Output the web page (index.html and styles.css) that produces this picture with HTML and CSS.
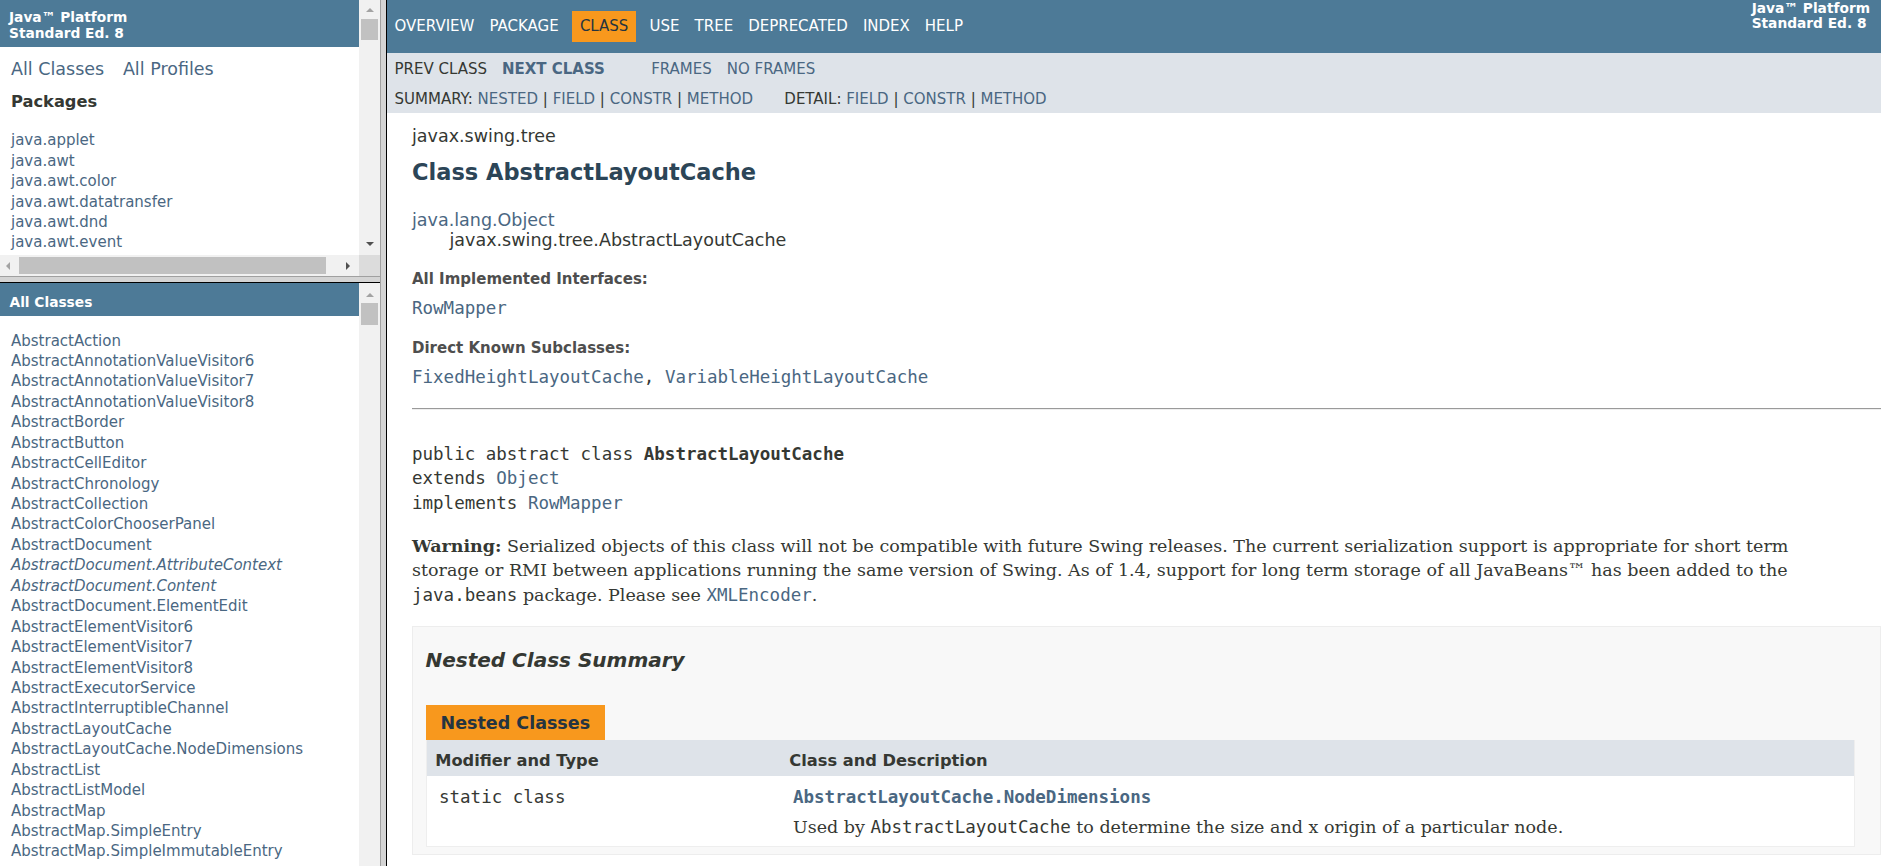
FILE: index.html
```html
<!DOCTYPE html>
<html lang="en">
<head>
<meta charset="utf-8">
<title>AbstractLayoutCache (Java Platform SE 8 )</title>
<link rel="stylesheet" href="styles.css">
</head>
<body>
<div class="frameset">
  <div class="leftcol">
    <div class="pkgframe">
      <div class="pkgframe-main">
        <div class="frame-view">
          <h1 class="bar bar-top">Java™ Platform<br>Standard Ed. 8</h1>
          <div class="indexHeader"><span><a href="#">All Classes</a></span><span><a href="#">All Profiles</a></span></div>
          <div class="indexContainer pkgContainer">
            <h2 class="pkgTitle">Packages</h2>
            <ul class="pkgList">
              <li><a href="#">java.applet</a></li>
              <li><a href="#">java.awt</a></li>
              <li><a href="#">java.awt.color</a></li>
              <li><a href="#">java.awt.datatransfer</a></li>
              <li><a href="#">java.awt.dnd</a></li>
              <li><a href="#">java.awt.event</a></li>
            </ul>
          </div>
        </div>
        <div class="vscroll">
          <div class="sb-btn sb-up"><span class="tri-up"></span></div>
          <div class="vthumb"></div>
          <div class="sb-btn sb-down"><span class="tri-down"></span></div>
        </div>
      </div>
      <div class="hscroll-row">
        <div class="hscroll">
          <div class="sb-left"><span class="tri-left"></span></div>
          <div class="hthumb"></div>
          <div class="sb-right"><span class="tri-right"></span></div>
        </div>
        <div class="sb-corner"></div>
      </div>
    </div>
    <div class="hborder"></div>
    <div class="classframe">
      <div class="frame-view">
        <h1 class="bar bar-low">All Classes</h1>
        <div class="indexContainer classContainer">
          <ul class="classList">
            <li><a href="#">AbstractAction</a></li>
            <li><a href="#">AbstractAnnotationValueVisitor6</a></li>
            <li><a href="#">AbstractAnnotationValueVisitor7</a></li>
            <li><a href="#">AbstractAnnotationValueVisitor8</a></li>
            <li><a href="#">AbstractBorder</a></li>
            <li><a href="#">AbstractButton</a></li>
            <li><a href="#">AbstractCellEditor</a></li>
            <li><a href="#">AbstractChronology</a></li>
            <li><a href="#">AbstractCollection</a></li>
            <li><a href="#">AbstractColorChooserPanel</a></li>
            <li><a href="#">AbstractDocument</a></li>
            <li><a href="#" class="iface">AbstractDocument.AttributeContext</a></li>
            <li><a href="#" class="iface">AbstractDocument.Content</a></li>
            <li><a href="#">AbstractDocument.ElementEdit</a></li>
            <li><a href="#">AbstractElementVisitor6</a></li>
            <li><a href="#">AbstractElementVisitor7</a></li>
            <li><a href="#">AbstractElementVisitor8</a></li>
            <li><a href="#">AbstractExecutorService</a></li>
            <li><a href="#">AbstractInterruptibleChannel</a></li>
            <li><a href="#">AbstractLayoutCache</a></li>
            <li><a href="#">AbstractLayoutCache.NodeDimensions</a></li>
            <li><a href="#">AbstractList</a></li>
            <li><a href="#">AbstractListModel</a></li>
            <li><a href="#">AbstractMap</a></li>
            <li><a href="#">AbstractMap.SimpleEntry</a></li>
            <li><a href="#">AbstractMap.SimpleImmutableEntry</a></li>
          </ul>
        </div>
      </div>
      <div class="vscroll">
        <div class="sb-btn sb-up sb-up-low"><span class="tri-up"></span></div>
        <div class="vthumb vthumb-low"></div>
      </div>
    </div>
  </div>
  <div class="vborder"></div>
  <div class="mainframe">
    <div class="topNav">
      <ul class="navList">
        <li><a href="#">Overview</a></li>
        <li><a href="#">Package</a></li>
        <li class="navBarCell1Rev">Class</li>
        <li><a href="#">Use</a></li>
        <li><a href="#">Tree</a></li>
        <li><a href="#">Deprecated</a></li>
        <li><a href="#">Index</a></li>
        <li><a href="#">Help</a></li>
      </ul>
      <div class="aboutLanguage">Java™ Platform<br>Standard Ed. 8</div>
    </div>
    <div class="subNav">
      <div class="subNavRow">
        <ul class="navList">
          <li>Prev&nbsp;Class</li>
          <li><a href="#"><span class="typeNameLink">Next&nbsp;Class</span></a></li>
        </ul>
        <ul class="navList">
          <li><a href="#">Frames</a></li>
          <li><a href="#">No&nbsp;Frames</a></li>
        </ul>
      </div>
      <div class="subNavRow2">
        <ul class="subNavList">
          <li>Summary:&nbsp;</li>
          <li><a href="#">Nested</a>&nbsp;|&nbsp;</li>
          <li><a href="#">Field</a>&nbsp;|&nbsp;</li>
          <li><a href="#">Constr</a>&nbsp;|&nbsp;</li>
          <li><a href="#">Method</a></li>
        </ul>
        <ul class="subNavList">
          <li>Detail:&nbsp;</li>
          <li><a href="#">Field</a>&nbsp;|&nbsp;</li>
          <li><a href="#">Constr</a>&nbsp;|&nbsp;</li>
          <li><a href="#">Method</a></li>
        </ul>
      </div>
    </div>
    <div class="header">
      <div class="subTitle">javax.swing.tree</div>
      <h2 class="title">Class AbstractLayoutCache</h2>
    </div>
    <div class="contentContainer">
      <ul class="inheritance">
        <li><a href="#">java.lang.Object</a></li>
        <li>
          <ul class="inheritance inner">
            <li>javax.swing.tree.AbstractLayoutCache</li>
          </ul>
        </li>
      </ul>
      <div class="description">
        <dl class="infoList">
          <dt>All Implemented Interfaces:</dt>
          <dd><a href="#">RowMapper</a></dd>
        </dl>
        <dl class="infoList">
          <dt>Direct Known Subclasses:</dt>
          <dd><a href="#">FixedHeightLayoutCache</a>, <a href="#">VariableHeightLayoutCache</a></dd>
        </dl>
        <hr class="rule">
        <pre class="signature">public abstract class <span class="typeNameLabel">AbstractLayoutCache</span>
extends <a href="#">Object</a>
implements <a href="#">RowMapper</a></pre>
        <div class="docBlock"><strong>Warning:</strong> Serialized objects of this class will not be compatible with future Swing releases. The current serialization support is appropriate for short term storage or RMI between applications running the same version of Swing. As of 1.4, support for long term storage of all JavaBeans™ has been added to the <code class="inlineCode">java.beans</code> package. Please see <a href="#"><code class="inlineCode">XMLEncoder</code></a>.</div>
      </div>
      <div class="summaryBox">
        <h3 class="summaryTitle">Nested Class Summary</h3>
        <table class="memberSummary">
          <caption><span class="tabLabel">Nested Classes</span></caption>
          <tr>
            <th class="colFirst">Modifier and Type</th>
            <th class="colLast">Class and Description</th>
          </tr>
          <tr>
            <td class="colFirst"><code class="cellCode">static class</code></td>
            <td class="colLast"><code class="cellCode"><a href="#" class="memberNameLink">AbstractLayoutCache.NodeDimensions</a></code>
              <div class="cellBlock">Used by <code class="inlineCode">AbstractLayoutCache</code> to determine the size and x origin of a particular node.</div>
            </td>
          </tr>
        </table>
      </div>
    </div>
  </div>
</div>
</body>
</html>
```

FILE: styles.css
```css
* { box-sizing: border-box; }
html, body { margin: 0; padding: 0; }
body {
  width: 1881px;
  height: 866px;
  overflow: hidden;
  background: #ffffff;
  color: #353833;
  font-family: "DejaVu Sans", "Liberation Sans", Arial, sans-serif;
}
a { color: #4A6782; text-decoration: none; }
ul { margin: 0; padding: 0; list-style: none; }
h1, h2, h3 { margin: 0; }

/* ---------- frameset ---------- */
.frameset { display: flex; height: 866px; }
.leftcol { flex: none; width: 380px; display: flex; flex-direction: column; }
.pkgframe { flex: none; height: 276px; display: flex; flex-direction: column; }
.pkgframe-main { flex: none; height: 255px; display: flex; }
.frame-view { flex: none; width: 359px; overflow: hidden; background: #fff; }
.hborder {
  flex: none; height: 7px;
  border-top: 1px solid #a0a0a0;
  border-bottom: 1px solid #000;
  background: #d4d4d4;
}
.classframe { flex: 1; min-height: 0; display: flex; }
.vborder {
  flex: none; width: 7px;
  border-left: 1px solid #a0a0a0;
  border-right: 1px solid #000;
  background: #d4d4d4;
}
.mainframe { flex: none; width: 1494px; overflow: hidden; }

/* ---------- fake scrollbars ---------- */
.vscroll {
  flex: none; width: 21px; background: #f1f1f1;
  display: flex; flex-direction: column; align-items: center;
}
.sb-btn { flex: none; width: 21px; height: 17px; display: flex; justify-content: center; }
.sb-up { padding-top: 7.5px; }
.sb-up-low { padding-top: 9.5px; }
.sb-down { margin-top: auto; padding-top: 4px; }
.tri-up {
  width: 0; height: 0;
  border-left: 4px solid transparent; border-right: 4px solid transparent;
  border-bottom: 4px solid #a3a3a3;
}
.tri-down {
  width: 0; height: 0;
  border-left: 4px solid transparent; border-right: 4px solid transparent;
  border-top: 4px solid #505050;
}
.vthumb { flex: none; width: 17px; height: 21px; margin-top: 2px; background: #c1c1c1; }
.vthumb-low { margin-top: 3px; height: 22px; }
.hscroll-row { flex: none; height: 21px; display: flex; }
.hscroll { flex: none; width: 359px; background: #f1f1f1; display: flex; align-items: center; }
.sb-left { flex: none; width: 19px; padding-left: 6px; display: flex; }
.sb-right { flex: none; margin-left: auto; width: 17px; padding-left: 4px; display: flex; }
.tri-left {
  width: 0; height: 0;
  border-top: 4px solid transparent; border-bottom: 4px solid transparent;
  border-right: 4px solid #a3a3a3;
}
.tri-right {
  width: 0; height: 0;
  border-top: 4px solid transparent; border-bottom: 4px solid transparent;
  border-left: 4px solid #505050;
}
.hthumb { flex: none; width: 307px; height: 17px; background: #c1c1c1; }
.sb-corner { flex: none; width: 21px; background: #dcdcdc; }

/* ---------- left frames ---------- */
.bar {
  background: #4D7A97;
  color: #ffffff;
  font-size: 13.75px;
  font-weight: bold;
  line-height: 16px;
  white-space: nowrap;
}
.bar-top { padding: 9px 7px 5.7px 9px; }
.bar-low { padding: 11px 7px 5.7px 9.5px; }
.indexHeader {
  margin: 12.1px 0 0 11px;
  display: flex;
  gap: 18.7px;
  font-size: 17.5px;
  line-height: 20.4px;
  white-space: nowrap;
}
.indexContainer { margin-left: 11px; font-size: 15px; white-space: nowrap; }
.pkgTitle {
  margin-top: 13px;
  font-size: 16.25px;
  line-height: 19px;
  padding-bottom: 3.75px;
  color: #353833;
}
.pkgList { margin-top: 13.9px; }
.pkgList li, .classList li { padding-top: 2.45px; line-height: 18px; }
.classContainer { margin-top: 13.4px; }
.iface { font-style: italic; }

/* ---------- main frame nav ---------- */
.topNav {
  height: 52.5px;
  background: #4D7A97;
  color: #ffffff;
  display: flex;
  align-items: flex-start;
  font-size: 15px;
}
.navList { display: flex; }
.topNav .navList { margin-top: 11px; }
.navList li {
  padding: 6.25px 7.5px;
  line-height: 18px;
  text-transform: uppercase;
  white-space: nowrap;
}
.topNav a { color: #ffffff; }
.navBarCell1Rev { background: #F8981D; color: #253441; margin: 0 6.25px; }
.aboutLanguage {
  margin-left: auto;
  padding: 0.5px 11px 0 0;
  font-size: 13.75px;
  line-height: 15px;
  font-weight: bold;
  color: #ffffff;
  white-space: nowrap;
}
.subNav { height: 60.8px; background: #dee3e9; font-size: 15px; }
.subNavRow { display: flex; height: 37px; padding-top: 0.8px; }
.subNavRow .navList { margin-right: 31.25px; }
.subNavRow2 {
  display: flex;
  padding-left: 7.5px;
  line-height: 18px;
  text-transform: uppercase;
  white-space: nowrap;
}
.subNavList { display: flex; margin-right: 31.25px; }
.typeNameLink { font-weight: bold; }

/* ---------- main content ---------- */
.header { padding: 12.4px 0 0 25px; }
.subTitle { font-size: 17.5px; line-height: 20.4px; }
.title {
  margin-top: 13.4px;
  font-size: 22.5px;
  line-height: 26px;
  font-weight: bold;
  color: #2c4557;
}
.contentContainer { padding: 24.4px 0 0 25px; }
.inheritance { font-size: 17.5px; line-height: 20.6px; }
.inheritance.inner { padding-left: 37.5px; }
.infoList { margin: 0; }
.infoList dt {
  margin-top: 18.8px;
  font-size: 15px;
  line-height: 18px;
  font-weight: bold;
  color: #4E4E4E;
}
.infoList dd {
  margin: 8px 0 0 0;
  font-family: "DejaVu Sans Mono", "Liberation Mono", monospace;
  font-size: 17.5px;
  line-height: 24.5px;
}
.rule {
  margin: 18.2px 0 0 0;
  height: 0;
  border: 0;
  border-top: 1px solid #9a9a9a;
  border-bottom: 1px solid #eeeeee;
}
.signature {
  margin: 32px 0 0 0;
  font-family: "DejaVu Sans Mono", "Liberation Mono", monospace;
  font-size: 17.5px;
  line-height: 24.5px;
  color: #353833;
}
.typeNameLabel { font-weight: bold; }
.docBlock {
  margin-top: 18.2px;
  max-width: 1440px;
  font-family: "DejaVu Serif", "Liberation Serif", serif;
  font-size: 17.5px;
  line-height: 24.5px;
}
.inlineCode {
  font-family: "DejaVu Sans Mono", "Liberation Mono", monospace;
  font-size: 17.5px;
}
.summaryBox {
  margin-top: 18.8px;
  border: 1px solid #ededed;
  background: #f8f8f8;
  padding: 0 25px 6.25px 12.5px;
}
.summaryTitle {
  margin: 18.8px 0;
  font-size: 20px;
  line-height: 28px;
  font-style: italic;
  font-weight: bold;
  color: #353833;
}
.memberSummary {
  width: 100%;
  border-collapse: separate;
  border-spacing: 0;
  border-left: 1px solid #EEE;
  border-right: 1px solid #EEE;
  border-bottom: 1px solid #EEE;
  background: #ffffff;
}
.memberSummary caption {
  text-align: left;
  padding-top: 12.5px;
  background: #f8f8f8;
  white-space: pre;
}
.tabLabel {
  display: inline-block;
  height: 35px;
  padding: 7.5px 15px 0 15px;
  background: #F8981D;
  color: #253441;
  font-weight: bold;
  font-size: 17.5px;
  line-height: 22px;
  vertical-align: top;
}
.memberSummary th {
  background: #dee3e9;
  text-align: left;
  padding: 10px 3.75px 3.75px 8.75px;
  font-size: 16.25px;
  line-height: 22.75px;
  font-weight: bold;
  vertical-align: top;
}
.memberSummary th.colFirst { width: 354px; }
.memberSummary td {
  text-align: left;
  vertical-align: top;
  padding: 9px 0 7px 12.5px;
  font-size: 16.25px;
  line-height: 24.5px;
  white-space: nowrap;
}
.cellCode {
  font-family: "DejaVu Sans Mono", "Liberation Mono", monospace;
  font-size: 17.5px;
  line-height: 24.5px;
}
.memberNameLink { font-weight: bold; }
.cellBlock {
  margin-top: 4px;
  font-family: "DejaVu Serif", "Liberation Serif", serif;
  font-size: 17.5px;
  line-height: 24.5px;
}
```
